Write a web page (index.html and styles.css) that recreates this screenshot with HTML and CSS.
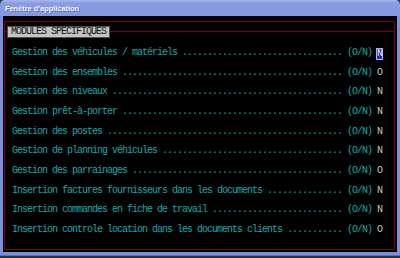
FILE: index.html
```html
<!DOCTYPE html>
<html lang="fr">
<head>
    <meta charset="UTF-8">
    <title>Fenêtre d'application</title>
    <link rel="stylesheet" href="styles.css">
</head>
<body>
    <div class="window">
        <div class="titlebar">Fenêtre d'application</div>
        <div class="client">
            <div class="frame">
                <div class="legend-row">
                    <span class="line-left"></span>
                    <span class="legend">MODULES SPECIFIQUES</span>
                    <span class="line-right"></span>
                </div>
                <div class="rows">
                    <div class="row">Gestion des véhicules / matériels ................................ (O/N) <span class="val cursor">N</span></div>
                    <div class="row">Gestion des ensembles ............................................ (O/N) <span class="val">O</span></div>
                    <div class="row">Gestion des niveaux .............................................. (O/N) <span class="val">N</span></div>
                    <div class="row">Gestion prêt-à-porter ............................................ (O/N) <span class="val">N</span></div>
                    <div class="row">Gestion des postes ............................................... (O/N) <span class="val">N</span></div>
                    <div class="row">Gestion de planning véhicules .................................... (O/N) <span class="val">N</span></div>
                    <div class="row">Gestion des parrainages .......................................... (O/N) <span class="val">O</span></div>
                    <div class="row">Insertion factures fournisseurs dans les documents ............... (O/N) <span class="val">N</span></div>
                    <div class="row">Insertion commandes en fiche de travail .......................... (O/N) <span class="val">N</span></div>
                    <div class="row">Insertion controle location dans les documents clients ........... (O/N) <span class="val">O</span></div>
                </div>
            </div>
        </div>
    </div>
</body>
</html>
```
FILE: styles.css
```css
body {
    margin: 0;
    padding: 0;
    background-color: #1e3a3e;
}

.window {
    width: 400px;
    height: 256px;
    box-sizing: border-box;
    padding: 0 3px 4px 3px;
    background-color: #7b8fda;
    border-radius: 5px 5px 0 0;
    box-shadow: inset 0 -1px 0 #5a6cbc;
}

.titlebar {
    height: 16px;
    margin: 0 -3px;
    padding-left: 5px;
    border-radius: 5px 5px 0 0;
    background: linear-gradient(#aab8ee, #8a9ce2 3px, #8598e0);
    color: #f4f6ff;
    font-family: "Liberation Sans", Arial, sans-serif;
    font-weight: bold;
    font-size: 7.4px;
    line-height: 17px;
    text-shadow: 1px 1px 0 #5a6cb8;
}

.client {
    height: 236px;
    box-sizing: border-box;
    padding: 5px 2px 0 1px;
    background-color: #000;
}

.frame {
    height: 229px;
    box-sizing: border-box;
    border: 1px solid #800000;
}

.legend-row {
    display: flex;
    margin-top: 4px;
}

.line-left,
.line-right {
    height: 1px;
    margin-top: 5px;
    background-color: #800000;
}

.line-left {
    width: 2px;
}

.line-right {
    flex: 1;
}

.legend {
    padding: 0 3px;
    border: 1px solid #505050;
    background-color: #c4c4c4;
    color: #101010;
    font-family: "Liberation Mono", "Courier New", monospace;
    font-size: 10px;
    letter-spacing: -1px;
    line-height: 10px;
    white-space: pre;
}

.rows {
    margin-top: 5px;
    padding-left: 7px;
}

.row {
    height: 19.67px;
    line-height: 19.67px;
    color: #12aaaa;
    font-family: "Liberation Mono", "Courier New", monospace;
    font-size: 10px;
    letter-spacing: -1px;
    white-space: pre;
}

.val {
    color: #c8c8c8;
}

.cursor {
    display: inline-block;
    width: 5px;
    height: 10px;
    line-height: 10px;
    background-color: #2a2aa8;
    box-shadow: 0 0 0 1px #aab4f0;
    color: #e8e8ff;
    vertical-align: -1px;
}
```
